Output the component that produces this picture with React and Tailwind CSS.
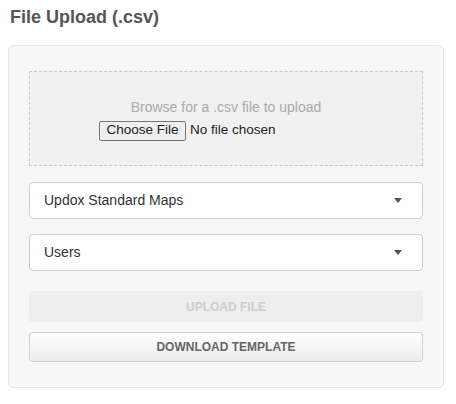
const Caret = () => (
    <svg width="8" height="5" viewBox="0 0 8 5" className="shrink-0">
        <path d="M0 0h8L4 5z" fill="#555" />
    </svg>
)

const SelectBox = ({ label }) => (
    <div className="flex h-[37px] items-center justify-between rounded-[4px] border border-[#cfcfcf] bg-white pl-[14px] pr-[20px] text-[14px] text-[#333]">
        <span>{label}</span>
        <Caret />
    </div>
)

export default function App() {
    return (
        <div className="w-[456px] h-[404px] bg-white font-['Liberation_Sans',Arial,sans-serif]">
            <h1 className="pl-[10px] pt-[6px] text-[18px] font-bold leading-[22px] text-[#555]">File Upload (.csv)</h1>
            <div className="ml-2 mt-[17px] w-[436px] rounded-[5px] border border-[#e6e6e6] bg-[#f7f7f7] px-5 pt-[25px] pb-[25px]">
                <div className="flex h-[95px] flex-col items-center justify-center border border-dashed border-[#c8c8c8] bg-[#f1f1f1] pt-[2px]">
                    <p className="text-[14px] leading-[18px] text-[#aaa]">Browse for a .csv file to upload</p>
                    <div className="mt-[4px] flex w-[254px] items-center text-[13.5px] text-[#222]">
                        <span className="flex h-[20px] w-[87px] items-center justify-center rounded-[2px] border border-[#767676] bg-[#efefef]">Choose File</span>
                        <span className="ml-[4px]">No file chosen</span>
                    </div>
                </div>
                <div className="mt-4 flex flex-col gap-[15px]">
                    <SelectBox label="Updox Standard Maps" />
                    <SelectBox label="Users" />
                </div>
                <button
                    type="button"
                    disabled
                    className="mt-5 flex h-[31px] w-full items-center justify-center rounded-[3px] bg-[#eeeeee] text-[12px] font-bold text-[#cdcdcd]"
                >
                    UPLOAD FILE
                </button>
                <button
                    type="button"
                    className="mt-[10px] flex h-[30px] w-full items-center justify-center rounded-[3px] border border-[#d0d0d0] bg-gradient-to-b from-white to-[#ececec] text-[12px] font-bold text-[#666]"
                >
                    DOWNLOAD TEMPLATE
                </button>
            </div>
        </div>
    )
}
